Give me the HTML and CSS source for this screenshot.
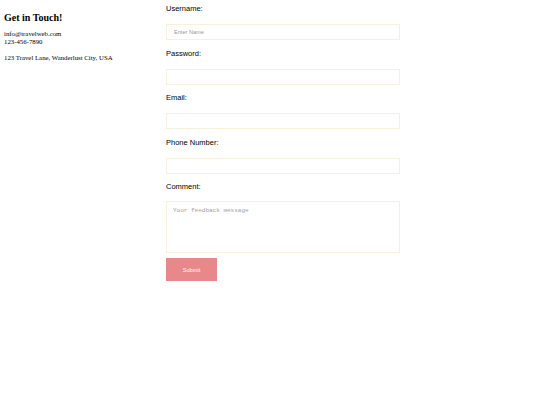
FILE: index.html
```html
<!DOCTYPE html>
<html>
<head>
<meta charset="utf-8">
<link rel="stylesheet" href="styles.css">
</head>
<body>
<div class="page">
  <div class="contact">
    <h2 class="title">Get in Touch!</h2>
    <p class="info">info@travelweb.com<br>123-456-7890</p>
    <p class="info">123 Travel Lane, Wanderlust City, USA</p>
  </div>
  <form class="form">
    <label class="label">Username:</label>
    <input class="field" type="text" placeholder="Enter Name">
    <label class="label">Password:</label>
    <input class="field" type="password">
    <label class="label">Email:</label>
    <input class="field" type="text">
    <label class="label">Phone Number:</label>
    <input class="field" type="text">
    <label class="label">Comment:</label>
    <textarea class="area" placeholder="Your feedback message"></textarea>
    <button class="submit" type="button">Submit</button>
  </form>
</div>
</body>
</html>
```
FILE: styles.css
```css
html, body { margin: 0; padding: 0; background: #fff; }
.page {
  display: flex;
  padding: 0 4px;
}
.contact {
  width: 162px;
  font-family: "Liberation Serif", serif;
  color: #000;
}
.title {
  font-size: 10px;
  font-weight: bold;
  margin: 10.5px 0 6.5px;
  line-height: 13px;
}
.info {
  font-size: 6.8px;
  line-height: 8px;
  margin: 0 0 7.5px;
}
.form {
  width: 234px;
  padding-top: 4px;
  display: flex;
  flex-direction: column;
  font-family: "Liberation Sans", Arial, sans-serif;
}
.label {
  font-size: 7.5px;
  line-height: 10px;
  color: #000;
}
.field {
  box-sizing: border-box;
  height: 16px;
  margin: 10px 0 8.5px;
  border: 1px solid #f6f1de;
  padding: 0 7px;
  font-family: "Liberation Sans", Arial, sans-serif;
  font-size: 5.6px;
  outline: none;
}
.field::placeholder { color: #9a9a9a; }
.area {
  box-sizing: border-box;
  height: 52px;
  margin: 9px 0 5px;
  border: 1px solid #f6f1de;
  padding: 5px 6px;
  font-family: "Liberation Mono", monospace;
  font-size: 6px;
  resize: none;
  outline: none;
}
.area::placeholder { color: #a0a0a0; }
.submit {
  align-self: flex-start;
  width: 51px;
  height: 23px;
  background: #e8888a;
  color: #fff;
  border: none;
  font-family: "Liberation Sans", Arial, sans-serif;
  font-size: 5.6px;
  padding: 0;
}
```
